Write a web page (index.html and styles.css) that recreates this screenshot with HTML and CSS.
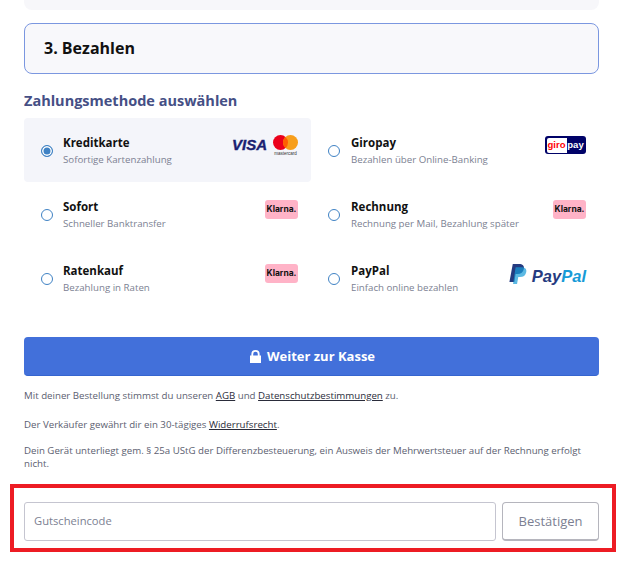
FILE: index.html
```html
<!DOCTYPE html>
<html lang="de">
<head>
    <meta charset="UTF-8">
    <meta name="viewport" content="width=device-width, initial-scale=1.0">
    <title>Bezahlen</title>
    <link rel="stylesheet" href="styles.css">
</head>
<body>
    <div class="checkout">
        <div class="prev-step"></div>
        <div class="step-header"><h2>3. Bezahlen</h2></div>
        <h3 class="method-title">Zahlungsmethode auswählen</h3>

        <div class="methods">
            <label class="method selected">
                <span class="radio"></span>
                <span class="method-text"><b>Kreditkarte</b><small>Sofortige Kartenzahlung</small></span>
                <span class="logos">
                    <span class="visa">VISA</span>
                    <svg class="mastercard" width="25" height="21" viewBox="0 0 25 21">
                        <circle cx="7.500" cy="7.500" r="7.500" fill="#eb001b"/>
                        <circle cx="17.500" cy="7.500" r="7.500" fill="#f79e1b"/>
                        <path d="M12.500 1.900a7.500 7.500 0 0 1 0 11.200a7.500 7.500 0 0 1 0-11.200z" fill="#ff5f00"/>
                        <text x="12.500" y="20" font-size="4.500" text-anchor="middle" fill="#333" font-family="Liberation Sans">mastercard</text>
                    </svg>
                </span>
            </label>
            <label class="method">
                <span class="radio"></span>
                <span class="method-text"><b>Giropay</b><small>Bezahlen über Online-Banking</small></span>
                <span class="logos"><span class="giropay"><i>giro</i><span>pay</span></span></span>
            </label>
            <label class="method">
                <span class="radio"></span>
                <span class="method-text"><b>Sofort</b><small>Schneller Banktransfer</small></span>
                <span class="logos"><span class="klarna">Klarna.</span></span>
            </label>
            <label class="method">
                <span class="radio"></span>
                <span class="method-text"><b>Rechnung</b><small>Rechnung per Mail, Bezahlung später</small></span>
                <span class="logos"><span class="klarna">Klarna.</span></span>
            </label>
            <label class="method">
                <span class="radio"></span>
                <span class="method-text"><b>Ratenkauf</b><small>Bezahlung in Raten</small></span>
                <span class="logos"><span class="klarna">Klarna.</span></span>
            </label>
            <label class="method">
                <span class="radio"></span>
                <span class="method-text"><b>PayPal</b><small>Einfach online bezahlen</small></span>
                <span class="logos logos-paypal">
                    <svg width="18" height="20" viewBox="0 0 18 21">
                        <path d="M3.500 0h6.500c3.800 0 5.800 1.800 5.200 5-.7 3.800-3.200 5.500-6.700 5.500H6.500L5.200 19H0z" fill="#253b80"/>
                        <path d="M6.500 3.500h6c3.800 0 5.800 1.800 5.200 4.800-.7 3.700-3.200 5.400-6.700 5.400H9.300L8 21H3.800z" fill="#179bd7" opacity=".7"/>
                    </svg>
                    <span class="paypal"><span>Pay</span><span class="pal">Pal</span></span>
                </span>
            </label>
        </div>

        <button class="pay-btn" type="button">
            <svg width="11" height="13" viewBox="0 0 12 14">
                <path d="M1.500 6V4.300a4.500 4.300 0 0 1 9 0V6H12v8H0V6zM3.500 6h5V4.300a2.500 2.400 0 0 0-5 0z" fill="#fff" fill-rule="evenodd"/>
            </svg>
            Weiter zur Kasse
        </button>

        <p class="legal">Mit deiner Bestellung stimmst du unseren <a href="#">AGB</a> und <a href="#">Datenschutzbestimmungen</a> zu.</p>
        <p class="legal">Der Verkäufer gewährt dir ein 30-tägiges <a href="#">Widerrufsrecht</a>.</p>
        <p class="legal legal-last">Dein Gerät unterliegt gem. § 25a UStG der Differenzbesteuerung, ein Ausweis der Mehrwertsteuer auf der Rechnung erfolgt nicht.</p>

        <div class="voucher">
            <input type="text" placeholder="Gutscheincode">
            <button type="button">Bestätigen</button>
        </div>
    </div>
</body>
</html>
```

FILE: styles.css
```css
body {
    font-family: "Open Sans", "Noto Sans", sans-serif;
    margin: 0;
    padding: 0;
    background-color: white;
    color: #111;
}
.checkout {
    padding: 0 31px 0 24px;
}
.prev-step {
    height: 10px;
    background-color: #f7f7fa;
    border-radius: 0 0 8px 8px;
}
.step-header {
    box-sizing: border-box;
    height: 51px;
    margin-top: 13px;
    padding: 0 19px 2px;
    display: flex;
    align-items: center;
    background-color: #f8f8fb;
    border: 1px solid #7b97e0;
    border-radius: 8px;
}
.step-header h2 {
    margin: 0;
    font-size: 16px;
    line-height: 22px;
    font-weight: 700;
}
.method-title {
    margin: 17px 0 7px;
    font-size: 14.500px;
    line-height: 20px;
    font-weight: 700;
    color: #454f85;
}
.methods {
    display: grid;
    grid-template-columns: 287px 288px;
    grid-auto-rows: 64px;
}
.method {
    display: flex;
    align-items: flex-start;
    padding: 16px 13px 0 17px;
    border-radius: 4px;
}
.method.selected {
    background-color: #f4f5fa;
}
.radio {
    box-sizing: border-box;
    flex: none;
    width: 12px;
    height: 12px;
    margin-top: 11px;
    border: 1.500px solid #3f82c4;
    border-radius: 50%;
    background-color: white;
}
.selected .radio {
    background-color: #3f82c4;
    box-shadow: inset 0 0 0 1.500px white;
}
.method-text {
    flex: 1;
    margin-left: 10px;
}
.method:nth-child(even) .method-text {
    margin-left: 11px;
}
.method-text b {
    display: block;
    font-size: 11.500px;
    line-height: 18px;
    font-weight: 700;
}
.method-text small {
    display: block;
    font-size: 9.700px;
    line-height: 15px;
    color: #7c7f92;
}
.logos {
    display: flex;
    align-items: flex-start;
    gap: 6px;
    margin-top: 1px;
}
.visa {
    font-family: "Liberation Sans", sans-serif;
    font-size: 15px;
    line-height: 20px;
    font-weight: 700;
    font-style: italic;
    color: #1a1f71;
    -webkit-text-stroke: 0.4px #1a1f71;
}
.klarna {
    display: block;
    width: 33px;
    height: 19px;
    margin-top: 1px;
    background-color: #ffb3c7;
    border-radius: 3px;
    font-family: "Inter", sans-serif;
    font-size: 8.500px;
    line-height: 19px;
    font-weight: 700;
    text-align: center;
    color: #111;
}
.giropay {
    display: flex;
    box-sizing: border-box;
    width: 41px;
    height: 18px;
    margin-top: 1px;
    padding: 1.500px;
    background-color: #000268;
    border-radius: 3px;
    font-family: "Liberation Sans", sans-serif;
    font-size: 9.500px;
    line-height: 14px;
    font-weight: 700;
}
.giropay i {
    width: 20px;
    font-style: normal;
    text-align: center;
    background-color: white;
    color: #ff0007;
    border-radius: 2px 0 0 2px;
}
.giropay span {
    flex: 1;
    text-align: center;
    color: white;
}
.logos-paypal {
    gap: 5px;
    margin-top: 2px;
}
.paypal {
    font-family: "Liberation Sans", sans-serif;
    font-size: 16.500px;
    line-height: 24px;
    font-weight: 700;
    font-style: italic;
    color: #253b80;
}
.pal {
    color: #179bd7;
}
.pay-btn {
    display: flex;
    align-items: center;
    justify-content: center;
    gap: 6px;
    width: 100%;
    height: 39px;
    margin-top: 27px;
    padding: 0 0 0 2px;
    background-color: #4270da;
    border: none;
    border-bottom: 1px solid #3565cf;
    border-radius: 4px;
    color: white;
    font-family: inherit;
    font-size: 13px;
    font-weight: 700;
}
.legal {
    margin: 13px 0 0;
    font-size: 9.700px;
    line-height: 13px;
    color: #5b5e70;
}
.legal + .legal {
    margin-top: 16px;
}
.legal + .legal-last {
    margin-top: 13px;
}
.legal a {
    color: #2a2c3a;
}
.voucher {
    display: flex;
    gap: 6px;
    height: 39px;
    margin: 14px -17px 0 -14px;
    padding: 14px 13px 7px 10px;
    border: 4px solid #ed1c24;
}
.voucher input {
    flex: 1;
    min-width: 0;
    box-sizing: border-box;
    padding: 0 9px 2px;
    background-color: white;
    border: 1px solid #c5c5d0;
    border-radius: 3px;
    font-family: inherit;
    font-size: 11.200px;
}
.voucher input::placeholder {
    color: #7c7f92;
}
.voucher button {
    width: 97px;
    background-color: white;
    border: 1px solid #b5b5bd;
    border-bottom-width: 2px;
    border-radius: 4px;
    font-family: inherit;
    font-size: 13px;
    color: #7c7f92;
}
```
